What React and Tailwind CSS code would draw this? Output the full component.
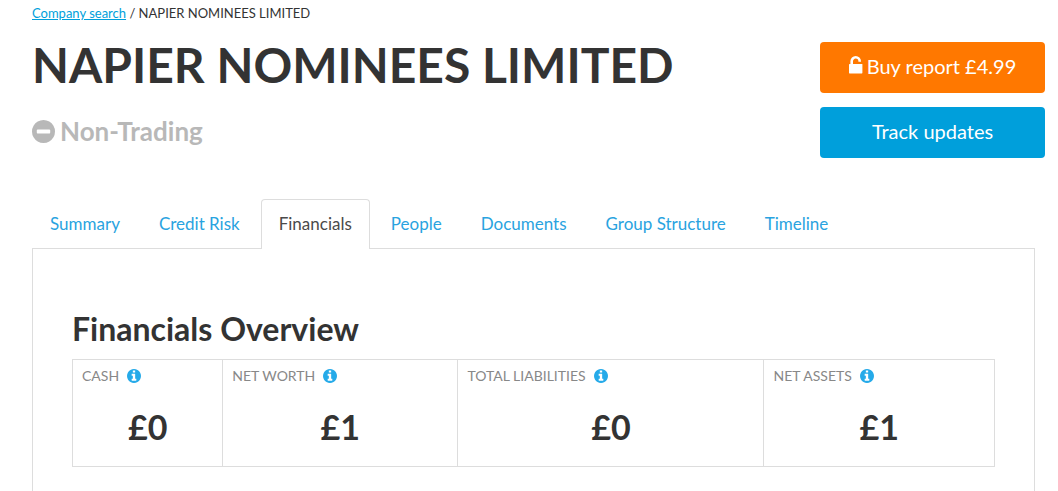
import clsx from 'clsx';

const tabs = ['Summary', 'Credit Risk', 'Financials', 'People', 'Documents', 'Group Structure', 'Timeline'];

const figures = [
    { label: 'Cash', value: '£0', col: 'w-[16.3%]' },
    { label: 'Net Worth', value: '£1', col: 'w-[25.5%]' },
    { label: 'Total Liabilities', value: '£0', col: 'w-[33.2%]' },
    { label: 'Net Assets', value: '£1', col: 'w-[25%]' },
];

const OpenLock = () => (
    <svg viewBox="0 0 14 18" className="w-[14px] h-[18px] shrink-0 -mt-1" aria-hidden="true">
        <path d="M2.7 9V5.3a4 4 0 0 1 8 0V5.8" fill="none" stroke="currentColor" strokeWidth="2.6" />
        <rect x="0" y="8" width="13.4" height="9.4" rx="0.6" fill="currentColor" />
    </svg>
);

const MinusCircle = () => (
    <svg viewBox="0 128 1536 1536" className="w-[23px] h-[23px] shrink-0" fill="currentColor" aria-hidden="true">
        <path d="M1216 960v-128q0-26-19-45t-45-19h-768q-26 0-45 19t-19 45v128q0 26 19 45t45 19h768q26 0 45-19t19-45zm320-64q0 209-103 385.5t-279.5 279.5-385.5 103-385.5-103-279.5-279.5-103-385.5 103-385.5 279.5-279.5 385.5-103 385.5 103 279.5 279.5 103 385.5z" />
    </svg>
);

const InfoCircle = () => (
    <svg viewBox="0 128 1536 1536" className="w-[14px] h-[14px] shrink-0 text-[#25aae9]" fill="currentColor" aria-hidden="true">
        <path d="M1024 1376v-160q0-14-9-23t-23-9h-96v-512q0-14-9-23t-23-9h-320q-14 0-23 9t-9 23v160q0 14 9 23t23 9h96v320h-96q-14 0-23 9t-9 23v160q0 14 9 23t23 9h448q14 0 23-9t9-23zm-128-896v-160q0-14-9-23t-23-9h-192q-14 0-23 9t-9 23v160q0 14 9 23t23 9h192q14 0 23-9t9-23zm640 416q0 209-103 385.5t-279.5 279.5-385.5 103-385.5-103-279.5-279.5-103-385.5 103-385.5 279.5-279.5 385.5-103 385.5 103 279.5 279.5 103 385.5z" />
    </svg>
);

const Header = () => (
    <header className="flex items-start justify-between">
        <div>
            <h1 className="text-[48px] leading-[60px] font-bold mt-[13px]">NAPIER NOMINEES LIMITED</h1>
            <p className="flex items-center gap-[5px] mt-5 text-[26px] leading-[32px] font-bold text-[#b8b8b8]">
                <MinusCircle />
                Non-Trading
            </p>
        </div>
        <div className="flex flex-col gap-[14px] w-[225px] shrink-0 mt-5 text-white text-[20px] leading-[27px]">
            <button className="flex items-center justify-center gap-1 pt-[11px] pb-[13px] rounded bg-[#ff7800]">
                <OpenLock />
                Buy report £4.99
            </button>
            <button className="pt-[11px] pb-[13px] rounded bg-[#009fdb]">Track updates</button>
        </div>
    </header>
);

const Tabs = ({ active }) => (
    <nav className="flex gap-[3px] mt-[41px] text-[17px] leading-[26px]">
        {tabs.map((tab) => (
            <a
                key={tab}
                href="#"
                aria-current={tab === active ? 'page' : undefined}
                className={clsx(
                    'px-[17px] pt-[11px] border border-b-0 rounded-t whitespace-nowrap',
                    tab === active
                        ? 'relative -mb-px pb-3 border-[#ddd] bg-white text-[#4a4a4a]'
                        : 'pb-[11px] border-transparent text-[#29a3e0]'
                )}
            >
                {tab}
            </a>
        ))}
    </nav>
);

const FinancialsOverview = () => (
    <section className="mr-[10px] px-[39px] pt-[60px] pb-10 border border-[#ddd]">
        <h2 className="text-[32px] leading-[40px] font-bold">Financials Overview</h2>
        <table className="w-full mt-[10px] table-fixed border-collapse border border-[#ddd]">
            <thead>
                <tr>
                    {figures.map(({ label, col }) => (
                        <th
                            key={label}
                            className={clsx(col, 'px-[9px] pt-[6px] border-x border-[#ddd] text-left font-normal uppercase text-[14px] leading-[20px] text-[#888]')}
                        >
                            <span className="flex items-center gap-2">
                                {label}
                                <InfoCircle />
                            </span>
                        </th>
                    ))}
                </tr>
            </thead>
            <tbody>
                <tr>
                    {figures.map(({ label, value }) => (
                        <td key={label} className="pt-5 pb-[18px] border-x border-[#ddd] text-center text-[34px] leading-[42px] font-bold">
                            {value}
                        </td>
                    ))}
                </tr>
            </tbody>
        </table>
    </section>
);

const App = () => (
    <main className="pl-8 pr-[13px] pt-1 bg-white text-[#333] font-['Lato',sans-serif]">
        <nav className="text-[13px] leading-[18px]">
            <a href="#" className="text-[#009fdb] underline">Company search</a>
            {' / NAPIER NOMINEES LIMITED'}
        </nav>
        <Header />
        <Tabs active="Financials" />
        <FinancialsOverview />
    </main>
);

export default App;
